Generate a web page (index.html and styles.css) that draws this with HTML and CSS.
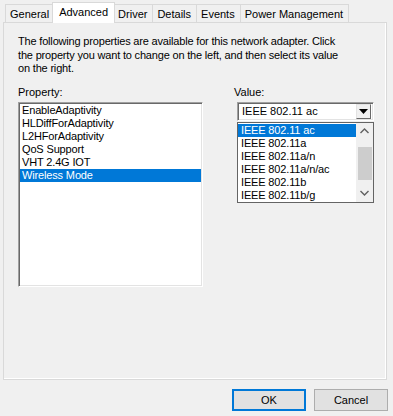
FILE: index.html
```html
<!DOCTYPE html>
<html>
  <head>
    <link rel="stylesheet" href="styles.css">
  </head>
  <body>
    <div class="dialog">
      <div class="tabs">
        <div class="tab">General</div>
        <div class="tab active">Advanced</div>
        <div class="tab">Driver</div>
        <div class="tab">Details</div>
        <div class="tab">Events</div>
        <div class="tab">Power Management</div>
      </div>
      <div class="page">
        <p class="intro">The following properties are available for this network adapter. Click the property you want to change on the left, and then select its value on the right.</p>
        <div class="columns">
          <div class="col-left">
            <div class="label">Property:</div>
            <ul class="listbox">
              <li>EnableAdaptivity</li>
              <li>HLDiffForAdaptivity</li>
              <li>L2HForAdaptivity</li>
              <li>QoS Support</li>
              <li>VHT 2.4G IOT</li>
              <li class="sel">Wireless Mode</li>
            </ul>
          </div>
          <div class="col-right">
            <div class="label">Value:</div>
            <div class="combo-wrap">
              <div class="combo">
                <span class="combo-text">IEEE 802.11 ac</span>
                <span class="combo-btn">
                  <svg width="9" height="5" viewBox="0 0 9 5"><path d="M0 0h9L4.5 5z" fill="#000"/></svg>
                </span>
              </div>
              <div class="popup">
                <ul class="options">
                  <li class="sel">IEEE 802.11 ac</li>
                  <li>IEEE 802.11a</li>
                  <li>IEEE 802.11a/n</li>
                  <li>IEEE 802.11a/n/ac</li>
                  <li>IEEE 802.11b</li>
                  <li>IEEE 802.11b/g</li>
                </ul>
                <div class="scrollbar">
                  <span class="sb-btn">
                    <svg width="9" height="6" viewBox="0 0 9 6"><path d="M0.5 5L4.5 1L8.5 5" fill="none" stroke="#606060" stroke-width="1.4"/></svg>
                  </span>
                  <span class="sb-track"><span class="sb-thumb"></span></span>
                  <span class="sb-btn">
                    <svg width="9" height="6" viewBox="0 0 9 6"><path d="M0.5 1L4.5 5L8.5 1" fill="none" stroke="#606060" stroke-width="1.4"/></svg>
                  </span>
                </div>
              </div>
            </div>
          </div>
        </div>
      </div>
      <div class="buttons">
        <button class="btn default">OK</button>
        <button class="btn">Cancel</button>
      </div>
    </div>
  </body>
</html>
```

FILE: styles.css
```css
html, body {
  margin: 0;
  padding: 0;
  background: #f0f0f0;
}
body {
  width: 393px;
  height: 416px;
  overflow: hidden;
  font-family: "Liberation Sans", Arial, sans-serif;
  font-size: 11px;
  color: #000;
}
.dialog {
  padding: 2px 5px 0 3px;
}
.tabs {
  display: flex;
  align-items: flex-end;
  height: 20px;
  padding-left: 2px;
  position: relative;
  z-index: 1;
}
.tab {
  height: 18px;
  line-height: 18px;
  box-sizing: border-box;
  padding: 0 5px 0 4px;
  border: 1px solid #d9d9d9;
  border-bottom: none;
  margin-left: -1px;
  background: #f0f0f0;
  white-space: nowrap;
}
.tab:first-child {
  margin-left: 0;
}
.tab.active {
  height: 21px;
  line-height: 18px;
  margin: 0 -2px -1px -3px;
  padding: 0 6px 0 6px;
  background: #fff;
  position: relative;
  z-index: 2;
}
.tab.active + .tab {
  margin-left: 0;
}
.page {
  width: 384px;
  height: 358px;
  box-sizing: border-box;
  border: 1px solid #d9d9d9;
  box-shadow: inset -1px -1px 0 #fff;
  padding: 12px 0 0 14px;
}
.intro {
  margin: 0;
  width: 326px;
  line-height: 13.5px;
  letter-spacing: -0.18px;
}
.columns {
  display: flex;
  margin-top: 10px;
}
.label {
  height: 13px;
  line-height: 13px;
  margin-bottom: 3px;
}
.col-left {
  width: 185px;
}
.col-right {
  margin-left: 31px;
}
ul {
  list-style: none;
  margin: 0;
  padding: 0;
}
.listbox {
  width: 185px;
  height: 185px;
  box-sizing: border-box;
  background: #fff;
  border: 1px solid;
  border-color: #a0a0a0 #fff #fff #a0a0a0;
  box-shadow: inset 1px 1px 0 #696969, inset -1px -1px 0 #e3e3e3;
  padding: 1px 1px 0 1px;
}
.listbox li,
.options li {
  height: 13px;
  line-height: 13px;
  padding-left: 2px;
  white-space: nowrap;
  letter-spacing: -0.15px;
}
li.sel {
  background: #0078d7;
  color: #fff;
}
.combo-wrap {
  position: relative;
  margin-left: 3px;
}
.combo {
  width: 137px;
  height: 19px;
  box-sizing: border-box;
  display: flex;
  align-items: center;
  background: #fff;
  border: 1px solid;
  border-color: #a0a0a0 #fff #fff #a0a0a0;
  box-shadow: inset 1px 1px 0 #696969, inset -1px -1px 0 #e3e3e3;
  padding: 2px 2px 2px 4px;
}
.combo-text {
  flex: 1;
}
.combo-btn {
  width: 15px;
  height: 15px;
  box-sizing: border-box;
  display: flex;
  align-items: center;
  justify-content: center;
  background: #f0f0f0;
  border: 1px solid;
  border-color: #e3e3e3 #696969 #696969 #e3e3e3;
}
.popup {
  position: absolute;
  left: 0;
  top: 20px;
  width: 137px;
  height: 81px;
  box-sizing: border-box;
  border: 1px solid #646464;
  background: #fff;
  display: flex;
}
.options {
  flex: 1;
  padding-top: 1px;
}
.options li {
  padding-left: 3px;
}
.scrollbar {
  width: 17px;
  background: #f0f0f0;
  display: flex;
  flex-direction: column;
}
.sb-btn {
  height: 17px;
  display: flex;
  align-items: center;
  justify-content: center;
}
.sb-track {
  flex: 1;
  padding: 7px 1px 0 2px;
}
.sb-thumb {
  display: block;
  height: 33px;
  background: #cdcdcd;
}
.buttons {
  display: flex;
  justify-content: flex-end;
  gap: 8px;
  margin-top: 9px;
}
.btn {
  width: 74px;
  height: 22px;
  box-sizing: border-box;
  margin: 0;
  font-family: "Liberation Sans", Arial, sans-serif;
  font-size: 11px;
  color: #000;
  background: #e1e1e1;
  border: 1px solid #adadad;
  padding: 0;
}
.btn.default {
  border: 2px solid #0078d7;
}
```
